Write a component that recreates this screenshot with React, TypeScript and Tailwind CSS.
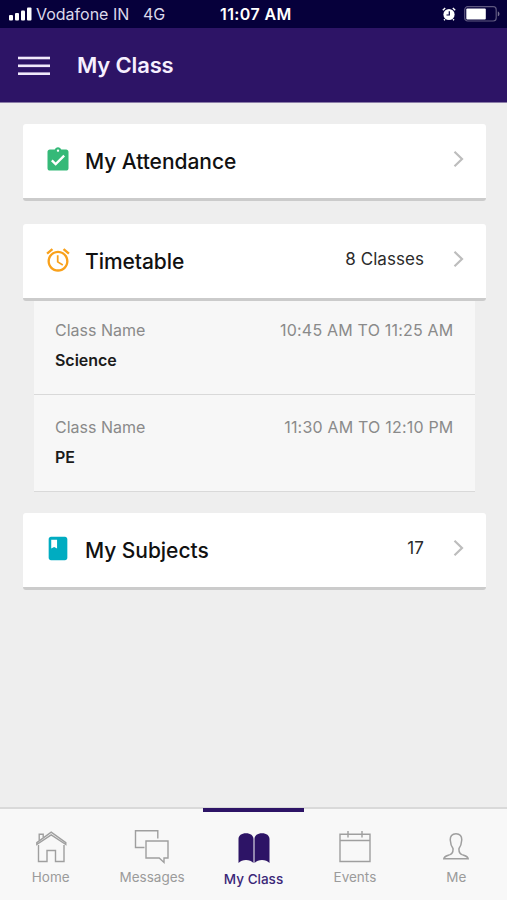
import React from 'react'
import cs from 'clsx'

type ClassItem = {
  name: string
  time: string
}

const classes: ClassItem[] = [
  { name: 'Science', time: '10:45 AM TO 11:25 AM' },
  { name: 'PE', time: '11:30 AM TO 12:10 PM' },
]

const tabs = [
  { label: 'Home', icon: <HomeIcon /> },
  { label: 'Messages', icon: <MessagesIcon /> },
  { label: 'My Class', icon: <BookIcon /> },
  { label: 'Events', icon: <CalendarIcon /> },
  { label: 'Me', icon: <PersonIcon /> },
]

function HomeIcon() {
  return (
    <svg width="32" height="34" viewBox="0 0 32 34" fill="none" stroke="#9f9f9f" strokeWidth="1.4">
      <path d="M3.5 15V31.500H12V20.500H20.500V31.500H29V15" />
      <path d="M1.800 14.500V12.600L16.200 2.200 30.800 12.600V14.500L16.200 4.800Z" />
      <path d="M4.200 10.500V4.200H8.200V7.500" />
    </svg>
  )
}

function MessagesIcon() {
  return (
    <svg width="36" height="34" viewBox="0 0 36 34" fill="none" stroke="#9f9f9f" strokeWidth="1.4">
      <path d="M10.500 17.500H1.500V0.800H23.800V8.500" />
      <path d="M12 11H34V28H30V32.400L25.200 28H12Z" />
    </svg>
  )
}

function BookIcon() {
  return (
    <svg width="32" height="34" viewBox="0 0 32 34" fill="#2d1466">
      <path d="M0.500 9C0.500 5.500 3.500 3.200 8 3.200S15.500 5.500 15.500 9V33C12 29 4 29 0.500 33Z" />
      <path d="M16.500 9C16.500 5.500 19.500 3.200 24 3.200S31.500 5.500 31.500 9V33C28 29 20 29 16.500 33Z" />
    </svg>
  )
}

function CalendarIcon() {
  return (
    <svg width="32" height="34" viewBox="0 0 32 34" fill="none" stroke="#9f9f9f" strokeWidth="1.400">
      <path d="M1 4.200H31V31.500H1ZM1 10.500H31M9 1V7.500M23 1V7.500" />
    </svg>
  )
}

function PersonIcon() {
  return (
    <svg width="26" height="34" viewBox="0 0 26 34" fill="none" stroke="#9f9f9f" strokeWidth="1.500">
      <path d="M13 3.700C9 3.700 7 6.500 7.300 10.300C7.500 14 8.500 16.500 10 18.500C10.300 22 9.800 23.500 7 24.600C3 26 1 26.200 0.800 28.800H25.200C25 26.200 23 26 19 24.600C16.200 23.500 15.700 22 16 18.500C17.500 16.500 18.500 14 18.700 10.300C19 6.500 17 3.700 13 3.700Z" />
    </svg>
  )
}

function AttendanceIcon() {
  return (
    <svg width="28" height="28" viewBox="0 0 24 24" fill="#35b978">
      <path d="M19 3h-4.18C14.4 1.84 13.3 1 12 1c-1.3 0-2.4.84-2.82 2H5c-1.1 0-2 .9-2 2v14c0 1.100.9 2 2 2h14c1.100 0 2-.9 2-2V5c0-1.100-.9-2-2-2zm-7 0c.55 0 1 .45 1 1s-.45 1-1 1-1-.45-1-1 .45-1 1-1zm-2 14l-4-4 1.410-1.410L10 14.170l6.590-6.590L18 9l-8 8z" />
    </svg>
  )
}

function AlarmIcon() {
  return (
    <svg width="28" height="28" viewBox="0 0 24 24" fill="#f9a11b">
      <path d="M22 5.720l-4.600-3.860-1.290 1.530 4.600 3.860L22 5.720zM7.880 3.390L6.600 1.860 2 5.710l1.290 1.530 4.590-3.850zM12.500 8H11v6l4.750 2.850.75-1.230-4-2.370V8zM12 4c-4.970 0-9 4.030-9 9s4.020 9 9 9c4.970 0 9-4.030 9-9s-4.030-9-9-9zm0 16c-3.870 0-7-3.130-7-7s3.130-7 7-7 7 3.130 7 7-3.130 7-7 7z" />
    </svg>
  )
}

function SubjectIcon() {
  return (
    <svg width="28" height="28" viewBox="0 0 24 24" fill="#00acc1">
      <path d="M18 1.600H6c-1.100 0-2 .9-2 2v16c0 1.100.9 2 2 2h12c1.100 0 2-.9 2-2v-16c0-1.100-.9-2-2-2zM6.200 4h5v7.500l-2.500-1.300-2.500 1.300V4z" />
    </svg>
  )
}

function StatusBar() {
  return (
    <div className="flex h-7 items-center bg-[#06003b] text-white">
      <svg width="23" height="14" viewBox="0 0 23 14" fill="#fff" className="ml-[9px]">
        <rect x="0" y="8" width="4" height="5.500" rx="1" />
        <rect x="6" y="6" width="4" height="7.500" rx="1" />
        <rect x="12" y="3.500" width="4" height="10" rx="1" />
        <rect x="18" y="0.500" width="4.500" height="13" rx="1" />
      </svg>
      <span className="ml-[4px] w-[107px] whitespace-nowrap text-[16px] text-[#dcd9ea]">Vodafone IN</span>
      <span className="w-[77px] text-[16px] text-[#dcd9ea]">4G</span>
      <span className="text-[16px] font-semibold tracking-[0.4px] whitespace-nowrap">11:07 AM</span>
      <svg width="14" height="14" viewBox="0 0 14 14" className="ml-auto">
        <circle cx="7" cy="7.500" r="5.600" fill="#fff" />
        <path d="M0.800 3.200 3.200 1M13.200 3.200 10.800 1M3 12.200 2 13.200M11 12.200 12 13.200" stroke="#fff" strokeWidth="1.500" />
        <path d="M7.300 4.200V8H4.500" stroke="#06003b" strokeWidth="1.200" fill="none" />
      </svg>
      <svg width="37" height="16" viewBox="0 0 37 16" className="mr-[6px] ml-[8px]">
        <rect x="0.700" y="0.700" width="31.500" height="14.300" rx="3" fill="none" stroke="#5f5880" strokeWidth="1.200" />
        <rect x="2.300" y="2.500" width="19.500" height="11" rx="1" fill="#fff" />
        <path d="M33.800 5.500C36 6 36 9.800 33.800 10.300Z" fill="#76708f" />
      </svg>
    </div>
  )
}

function Card({ icon, title, value }: { icon: React.ReactNode; title: string; value?: string }) {
  return (
    <div className="mr-[21.5px] ml-[22.5px] flex h-[77px] items-start rounded-[3px] border-b-[3px] border-[#cbcbcb] bg-white pl-[21.5px]">
      <div className="mt-[22px] w-[41px]">{icon}</div>
      <div className="mt-[23px] flex-1 text-[21px] leading-[30px] font-medium tracking-[-0.05px] text-[#111]">{title}</div>
      {value && <div className="mt-[23px] text-[17px] leading-[25px] tracking-[0.05px] text-[#2b2b2b]">{value}</div>}
      <svg width="11" height="18" viewBox="0 0 11 18" fill="none" stroke="#bdbdbd" strokeWidth="2.200" className="mt-[25.500px] mr-[21.500px] ml-[29px]">
        <path d="M1.500 1.800 9 9 1.500 16.200" />
      </svg>
    </div>
  )
}

function App() {
  return (
    <div className="flex h-[900px] w-[507px] flex-col overflow-hidden bg-[#eeeeee] font-['Inter','Liberation_Sans',sans-serif]">
      <StatusBar />
      <header className="flex h-[75px] items-center border-b border-[#8b7da8] bg-[#2d1466] pl-[18px]">
        <svg width="32" height="20" viewBox="0 0 32 20" fill="#f1e9fb" className="mt-px mr-[27px]">
          <rect y="0.700" width="32" height="2.600" />
          <rect y="8.500" width="32" height="2.600" />
          <rect y="16.400" width="32" height="2.600" />
        </svg>
        <h1 className="text-[22px] font-semibold tracking-[-0.15px] text-[#f6f0ff]">My Class</h1>
      </header>

      <main className="flex-1 pt-[21px]">
        <Card icon={<AttendanceIcon />} title="My Attendance" />
        <div className="h-[23px]" />
        <Card icon={<AlarmIcon />} title="Timetable" value="8 Classes" />
        <div className="mr-[32.5px] ml-[33.5px]">
          {classes.map((t) => (
            <div key={t.name} className="h-[97px] border-b border-[#d9d9d9] bg-[#f7f7f7] pt-[20px] pr-[21px] pl-[21.5px] first:h-[94px] first:pt-[17px]">
              <div className="flex justify-between text-[16px] leading-6 text-[#8a8a8a]">
                <span>Class Name</span>
                <span className="tracking-[0.2px]">{t.time}</span>
              </div>
              <div className="mt-[6px] text-[16px] leading-6 font-semibold tracking-[-0.05px] text-[#1b1b1b]">{t.name}</div>
            </div>
          ))}
        </div>
        <div className="h-[21px]" />
        <Card icon={<SubjectIcon />} title="My Subjects" value="17" />
      </main>

      <nav className="flex h-[93px] border-t-2 border-[#d9d9d9] bg-[#f8f8f8]">
        {tabs.map(({ label, icon }) => {
          const active = label === 'My Class'
          return (
            <div
              key={label}
              className={cs('-mt-px flex flex-1 flex-col items-center border-t-4', {
                'border-[#2d1466] text-[#3b2778]': active,
                'border-transparent text-[#9b9b9b]': !active,
              })}
            >
              <div className="mt-[18px] h-[34px]">{icon}</div>
              <span className={cs('text-[13.5px] leading-5', active ? 'mt-[5px] font-medium' : 'mt-[3px]')}>{label}</span>
            </div>
          )
        })}
      </nav>
    </div>
  )
}

export default App
